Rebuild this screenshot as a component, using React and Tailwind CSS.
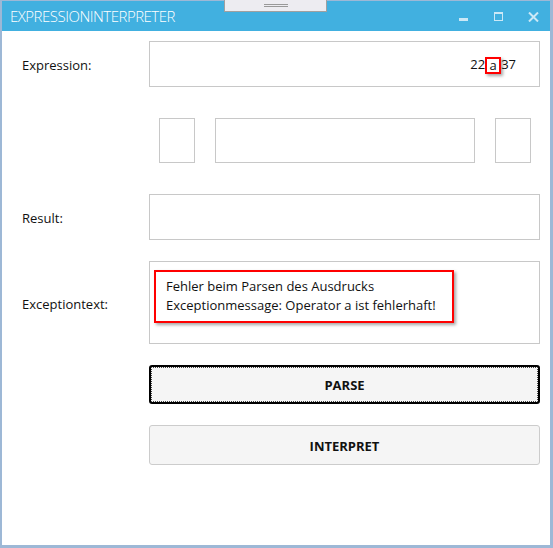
import React from "react";

const font = { fontFamily: '"Open Sans", "Noto Sans", sans-serif' };

function Box({ className = "", children }) {
  return <div className={`border border-[#c8c8c8] bg-white ${className}`}>{children}</div>;
}

export default function App() {
  return (
    <div className="relative w-[553px] h-[548px] bg-white border-t border-l-2 border-r-[3px] border-b-[3px] border-[#9db8d6] flex flex-col text-[#111]" style={font}>
      {/* Title bar */}
      <div className="h-[30px] bg-[#41b0e0] flex items-center pl-[8px] pr-[11px] pt-[1px] shrink-0">
        <span className="text-[15px] font-light text-white tracking-[-0.5px]">EXPRESSIONINTERPRETER</span>
        <div className="ml-auto flex items-center gap-[24px] text-[#cbe8f6]">
          <svg width="10" height="10" viewBox="0 0 10 10"><rect x="0" y="6" width="9" height="3" fill="#cbe8f6" /></svg>
          <svg width="10" height="10" viewBox="0 0 10 10" className="ml-[1px]"><rect x="0.5" y="0.5" width="8" height="8" fill="none" stroke="#cbe8f6" /><rect x="0" y="0" width="9" height="2" fill="#cbe8f6" /></svg>
          <svg width="11" height="10" viewBox="0 0 11 10"><path d="M1 0.5 L10 9.5 M10 0.5 L1 9.5" stroke="#cbe8f6" strokeWidth="2" /></svg>
        </div>
      </div>
      {/* top gadget */}
      <div className="absolute left-[222px] top-[-1px] w-[103px] h-[12px] bg-[#edecf1] border border-t-0 border-[#a0a0a0] flex flex-col items-center justify-center gap-[1px]">
        <div className="w-[24px] h-px bg-[#999]" />
        <div className="w-[24px] h-px bg-[#999]" />
      </div>

      {/* Content */}
      <div className="flex flex-col pt-[10px] text-[13px]">
        <div className="flex items-center">
          <div className="w-[147px] pl-[20px] pt-[4px]">Expression:</div>
          <Box className="w-[391px] h-[46px] flex items-center justify-end pr-[23px] pt-[2px]">
            <span>22</span>
            <span className="inline-flex items-center justify-center w-[16px] h-[17px] border-2 border-[#ff0000] shadow-[2px_2px_3px_rgba(0,0,0,0.35)] leading-none">a</span>
            <span>37</span>
          </Box>
        </div>

        <div className="flex mt-[31px]">
          <div className="w-[147px]" />
          <div className="w-[391px] flex pl-[10px] pr-[9px] gap-[20px]">
            <Box className="w-[36px] h-[45px]" />
            <Box className="flex-1 h-[45px]" />
            <Box className="w-[36px] h-[45px]" />
          </div>
        </div>

        <div className="flex items-center mt-[31px]">
          <div className="w-[147px] pl-[20px] pt-[4px]">Result:</div>
          <Box className="w-[391px] h-[46px]" />
        </div>

        <div className="flex items-center mt-[21px]">
          <div className="w-[147px] pl-[20px] pt-[4px]">Exceptiontext:</div>
          <Box className="w-[391px] h-[83px] pl-[4px] pt-[8px]">
            <div className="w-[300px] h-[53px] border-2 border-[#ff0000] shadow-[2px_2px_3px_rgba(0,0,0,0.35)] pl-[10px] pt-[5px] leading-[19px]">
              <div>Fehler beim Parsen des Ausdrucks</div>
              <div>Exceptionmessage: Operator a ist fehlerhaft!</div>
            </div>
          </Box>
        </div>

        <div className="flex mt-[21px]">
          <div className="w-[147px]" />
          <div className="relative w-[391px] h-[39px] bg-[#f5f5f5] border-2 border-black rounded-[3px] flex items-center justify-center font-bold pt-[3px]">
            <span className="absolute inset-0 border border-dotted border-[#444] rounded-[1px]" />
            PARSE
          </div>
        </div>

        <div className="flex mt-[21px]">
          <div className="w-[147px]" />
          <div className="w-[391px] h-[40px] bg-[#f5f5f5] border border-[#cccccc] rounded-[3px] flex items-center justify-center font-bold pt-[3px]">
            INTERPRET
          </div>
        </div>
      </div>
    </div>
  );
}
